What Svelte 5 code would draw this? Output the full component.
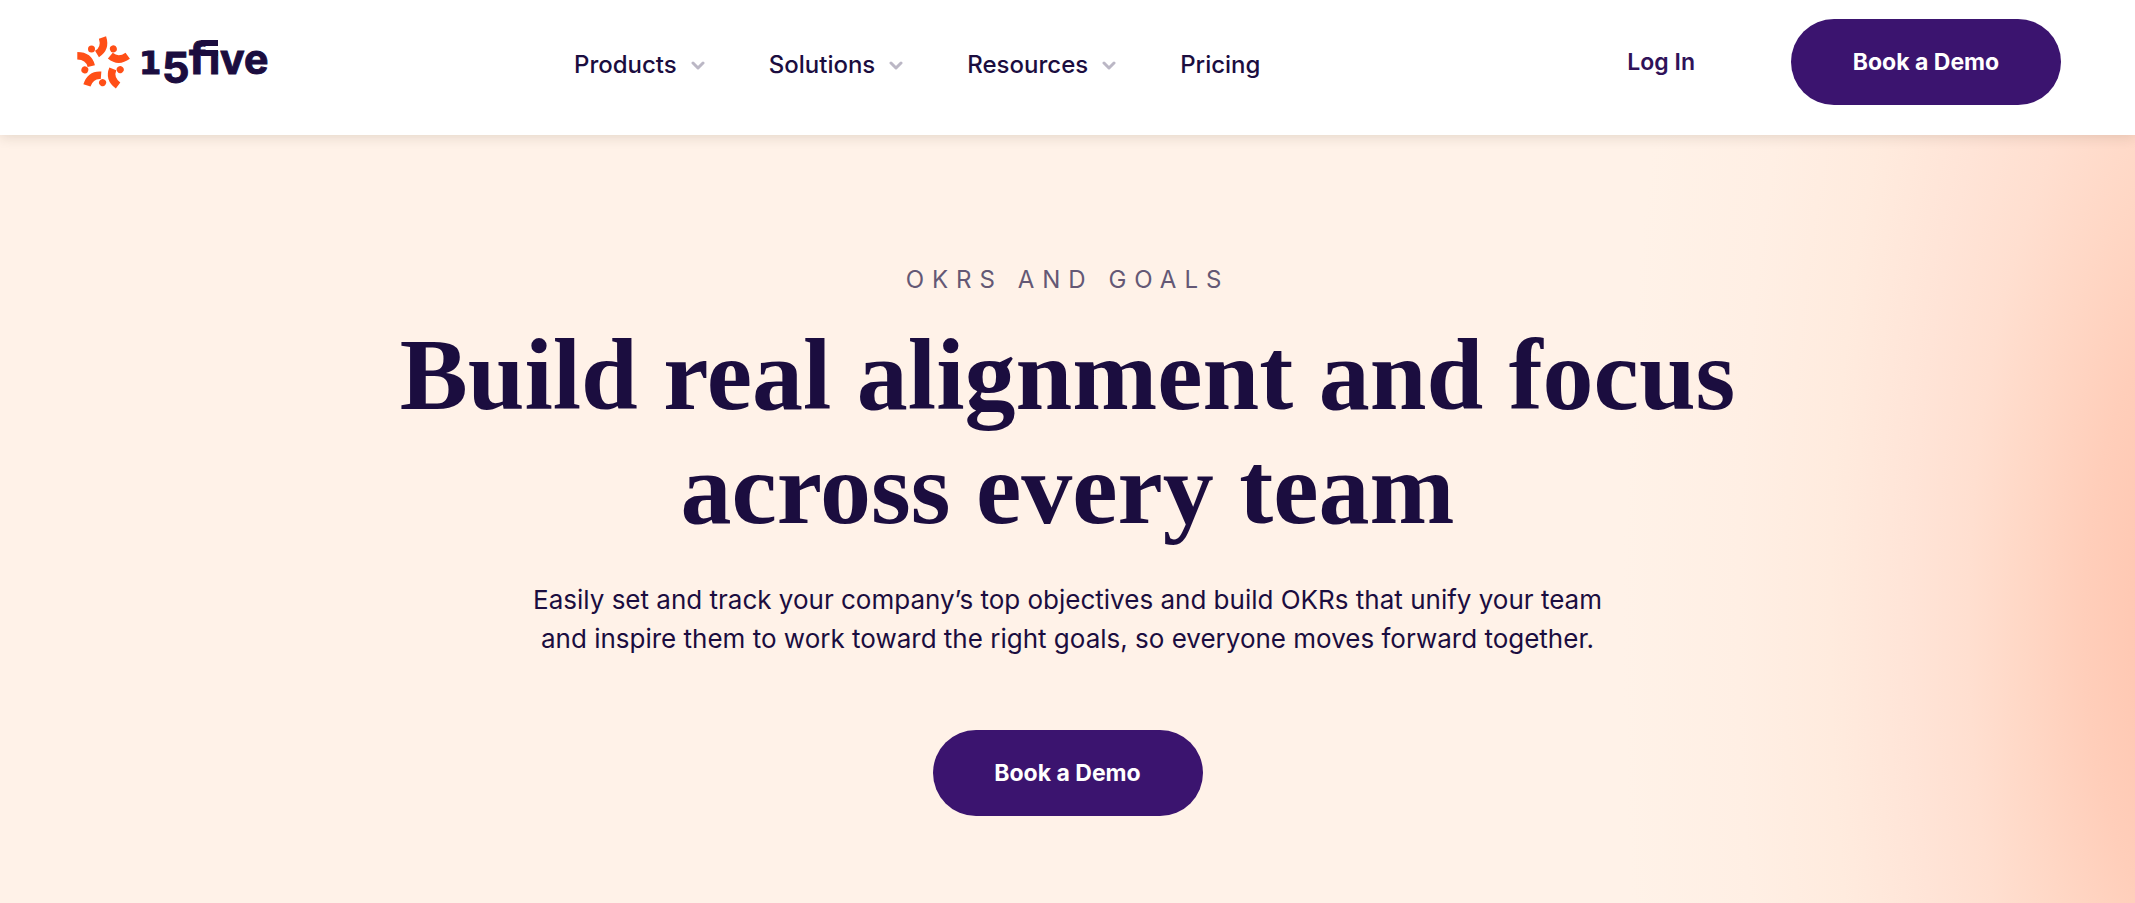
<script>
  const menu = [
    { label: 'Products', sub: true },
    { label: 'Solutions', sub: true },
    { label: 'Resources', sub: true },
    { label: 'Pricing', sub: false },
  ];
  const arms = [0, 72, 144, 216, 288];
</script>

<div class="page">
  <header>
    <a class="logo" href="#home" aria-label="15five">
      <svg width="200" height="72" viewBox="74 27 200 72">
        <g fill="none" stroke="#ff4f17">
          {#each arms as a}
            <g transform="rotate({a} 102.5 64)">
              <path d="M102.5 37.500Q106 48.500 97 54" stroke-width="7.500" />
              <circle cx="91.500" cy="49" r="3.500" fill="#ff4f17" stroke="none" />
            </g>
          {/each}
        </g>
        <text y="74" fill="#1b0d3f" stroke="#1b0d3f" stroke-width="1" font-family="Inter, sans-serif" font-weight="700" font-size="41"><tspan x="139" font-family="DejaVu Sans" font-size="32">1</tspan><tspan x="162" y="83" font-size="43">5</tspan><tspan x="189" y="74" font-size="44">f</tspan><tspan x="209" font-size="41">i</tspan><tspan x="220">v</tspan><tspan x="244">e</tspan></text>
        <!-- hood and crossbar that join the f to the i -->
        <path d="M207 40h13v11h-13z" fill="#fff" />
        <path d="M201 40h17v6h-17zM201 50h17v6h-17z" fill="#1b0d3f" />
      </svg>
    </a>
    <nav>
      {#each menu as m}
        {#if m.sub}
          <button class="item">
            {m.label}
            <svg width="14" height="9" viewBox="0 0 14 9"><path d="M2 2l5 5 5-5" fill="none" stroke="#bbb7c5" stroke-width="3" stroke-linecap="round" stroke-linejoin="round" /></svg>
          </button>
        {:else}
          <a class="item" href="#pricing">{m.label}</a>
        {/if}
      {/each}
    </nav>
    <div class="actions">
      <a class="login" href="#login">Log In</a>
      <a class="cta" href="#demo">Book a Demo</a>
    </div>
  </header>
  <main>
    <p class="eyebrow">OKRS AND GOALS</p>
    <h1>Build real alignment and focus<br />across every team</h1>
    <p class="lead">Easily set and track your company’s top objectives and build OKRs that unify your team<br />and inspire them to work toward the right goals, so everyone moves forward together.</p>
    <a class="cta" href="#demo">Book a Demo</a>
  </main>
</div>

<style>
  :global(body) {
    margin: 0;
  }
  .page {
    display: flex;
    flex-direction: column;
    min-height: 100vh;
    font-family: Inter, sans-serif;
    color: #1b0d3f;
  }
  header {
    position: relative;
    display: flex;
    align-items: flex-start;
    box-sizing: border-box;
    min-height: 135px;
    padding: 19px 74px 0;
    background: #fff;
    box-shadow: 0 2px 12px rgba(60, 40, 20, 0.14);
  }
  .logo {
    margin-top: 8px;
    line-height: 0;
  }
  .logo svg {
    overflow: visible;
  }
  nav {
    display: flex;
    gap: 64px;
    margin: 28px 0 0 300px;
  }
  .item {
    display: flex;
    align-items: center;
    gap: 14px;
    padding: 0;
    border: 0;
    background: none;
    font: 500 24px/36px Inter, sans-serif;
    color: inherit;
    text-decoration: none;
  }
  .actions {
    display: flex;
    align-items: center;
    gap: 96px;
    margin-left: auto;
  }
  .login {
    font: 600 23px/36px Inter, sans-serif;
    color: #2f1259;
    text-decoration: none;
  }
  .cta {
    display: flex;
    align-items: center;
    justify-content: center;
    box-sizing: border-box;
    width: 270px;
    height: 86px;
    border-radius: 43px;
    background: #3b146f;
    font-size: 23px;
    font-weight: 700;
    color: #fff;
    text-decoration: none;
  }
  main {
    flex: 1;
    display: flex;
    flex-direction: column;
    align-items: center;
    padding: 127px 32px 80px;
    text-align: center;
    background:
      radial-gradient(ellipse 27% 200% at 103% 64%, #ffc5af 0%, #ffc9b4 12%, #ffceba 20%, #ffd7c5 30%, #ffdfd0 40%, #ffe4d7 50%, #ffebde 64%, #ffefe4 80%, #fff2e8 100%);
  }
  p, h1 {
    margin: 0;
  }
  .eyebrow {
    font-size: 24px;
    line-height: 36px;
    letter-spacing: 8px;
    color: #645875;
  }
  h1 {
    margin-top: 20px;
    font: 700 102px/114px "Liberation Serif", serif;
    color: #1b0d3f;
  }
  .lead {
    margin-top: 34px;
    font-size: 26px;
    font-weight: 400;
    line-height: 39px;
  }
  main .cta {
    margin-top: 72px;
  }
</style>
